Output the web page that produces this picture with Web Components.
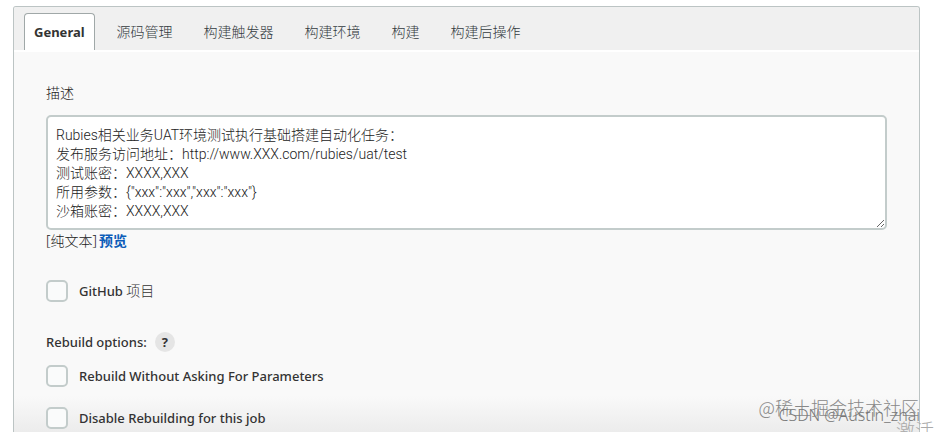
<!DOCTYPE html>
<html lang="zh-CN">
<head>
<meta charset="utf-8">
<title>General</title>
<style>
  html { height: 100%; overflow: hidden; background: #fff; }
  body {
    margin: 0; height: 100%; overflow: hidden; position: relative;
    box-sizing: border-box; padding: 6px 14px 0 13px;
    display: flex; flex-direction: column;
    font: 300 14px/20px "Noto Sans", "Noto Sans CJK SC", sans-serif;
    color: #222;
  }
  .cjk { font-size: 14px; font-weight: 300; }
</style>
</head>
<body>
<config-panel>
  <tab-bar slot="tabs">
    <tab-item active>General</tab-item>
    <tab-item>源码管理</tab-item>
    <tab-item>构建触发器</tab-item>
    <tab-item>构建环境</tab-item>
    <tab-item>构建</tab-item>
    <tab-item>构建后操作</tab-item>
  </tab-bar>
  <description-field label="描述" format="[纯文本]" action="预览">Rubies相关业务UAT环境测试执行基础搭建自动化任务：
发布服务访问地址：http://www.XXX.com/rubies/uat/test
测试账密：XXXX,XXX
所用参数：{"xxx":"xxx","xxx":"xxx"}
沙箱账密：XXXX,XXX</description-field>
  <check-option class="lone">GitHub <span class="cjk">项目</span></check-option>
  <option-group label="Rebuild options:">
    <check-option>Rebuild Without Asking For Parameters</check-option>
    <check-option>Disable Rebuilding for this job</check-option>
  </option-group>
</config-panel>
<page-watermark></page-watermark>

<script>
const define = (name, html, setup) => {
  const template = document.createElement('template');
  template.innerHTML = html;
  customElements.define(name, class extends HTMLElement {
    constructor() {
      super();
      this.attachShadow({ mode: 'open' }).append(template.content.cloneNode(true));
    }
    connectedCallback() {
      if (setup) setup(this, this.shadowRoot);
    }
  });
};

define('config-panel', `
  <style>
    :host {
      display: flex; flex-direction: column; flex: 1; min-height: 0;
      border: 1px solid #bcc4c4; border-bottom: 0; border-radius: 3px 3px 0 0;
      background: linear-gradient(to top, #ececec, #f9f9f9 36px);
      overflow: hidden;
    }
    main { padding: 31px 32px 0; }
    ::slotted(.lone) { margin-top: 29px; }
  </style>
  <slot name="tabs"></slot>
  <main><slot></slot></main>
`);

define('tab-bar', `
  <style>
    :host { display: block; background: #f0f0f0; border-bottom: 2px solid #fff; }
    nav { display: flex; padding: 6px 10px 0; }
  </style>
  <nav role="tablist"><slot></slot></nav>
`);

define('tab-item', `
  <style>
    :host { display: block; }
    button {
      display: block; height: 37px; padding: 0 10px; margin: 0 9px 0 0;
      border: 1px solid transparent; border-bottom: 0; border-radius: 4px 4px 0 0;
      background: none; color: #333a3e;
      font: 300 14px/20px "Noto Sans", "Noto Sans CJK SC", sans-serif;
      white-space: nowrap;
    }
    :host([active]) button {
      background: #fff; border-color: #a0a8a8; color: #333;
      font-size: 13px; font-weight: 700; padding: 0 9px; margin-right: 11px;
    }
  </style>
  <button type="button" role="tab"><slot></slot></button>
`, (host, root) => {
  root.querySelector('button').setAttribute('aria-selected', host.hasAttribute('active'));
});

define('description-field', `
  <style>
    :host { display: block; }
    label { display: block; margin-bottom: 12px; }
    textarea {
      display: block; box-sizing: border-box; width: 100%; height: 115px;
      margin: 0; padding: 9px 8px; border: 2px solid #c3cccb; border-radius: 5px;
      background: #fff; color: #222; resize: vertical; overflow: hidden; outline: 0;
      font: 300 14px/19px Roboto, "Noto Sans CJK SC", sans-serif;
    }
    .foot { display: flex; gap: 2px; line-height: 20px; margin-top: 1px; }
    a { color: #0b5cb8; font-weight: 700; text-decoration: none; }
  </style>
  <label for="text"></label>
  <textarea id="text" spellcheck="false"></textarea>
  <div class="foot"><span></span><a href="#preview"></a></div>
`, (host, root) => {
  root.querySelector('label').textContent = host.getAttribute('label');
  root.querySelector('textarea').value = host.textContent;
  root.querySelector('span').textContent = host.getAttribute('format');
  root.querySelector('a').textContent = host.getAttribute('action');
});

define('check-option', `
  <style>
    :host { display: block; }
    label {
      display: flex; align-items: center; gap: 11px; width: max-content;
      font-size: 13px; line-height: 22px; font-weight: 500; color: #333;
    }
    input {
      appearance: none; box-sizing: border-box; width: 22px; height: 22px; margin: 0;
      border: 2px solid #c3cccb; border-radius: 5px; background: #fafbfb;
    }
    input:checked { background: #0b5cb8; }
  </style>
  <label><input type="checkbox"><span><slot></slot></span></label>
`);

define('option-group', `
  <style>
    :host { display: block; margin-top: 30px; }
    header { display: flex; align-items: center; gap: 8px; margin-bottom: 13px; color: #333; }
    h2 { margin: 0; font-size: 13px; line-height: 20px; font-weight: 500; }
    button {
      width: 20px; height: 20px; padding: 0; border: 0; border-radius: 50%;
      background: #e5e5e5; color: #333;
      font: 700 13px/20px "Noto Sans", sans-serif;
    }
    div { display: flex; flex-direction: column; gap: 20px; }
  </style>
  <header><h2></h2><button type="button" aria-label="Help">?</button></header>
  <div><slot></slot></div>
`, (host, root) => {
  root.querySelector('h2').textContent = host.getAttribute('label');
});

define('page-watermark', `
  <style>
    :host { position: absolute; inset: 0; overflow: hidden; pointer-events: none; }
    span { position: absolute; white-space: nowrap; }
    .site { right: 15px; bottom: 12px; font: 300 18px/26px "Noto Sans CJK SC", sans-serif; color: #888; }
    .author { right: 14px; bottom: 6px; font: 300 16px/22px "Noto Sans", sans-serif; color: #777; }
    .system { right: 0; bottom: -12px; font: 300 19px/28px "Noto Sans CJK SC", sans-serif; color: #aaa; }
  </style>
  <span class="site">@稀土掘金技术社区</span>
  <span class="author">CSDN @Austin_zhai</span>
  <span class="system">激活</span>
`);
</script>
</body>
</html>
